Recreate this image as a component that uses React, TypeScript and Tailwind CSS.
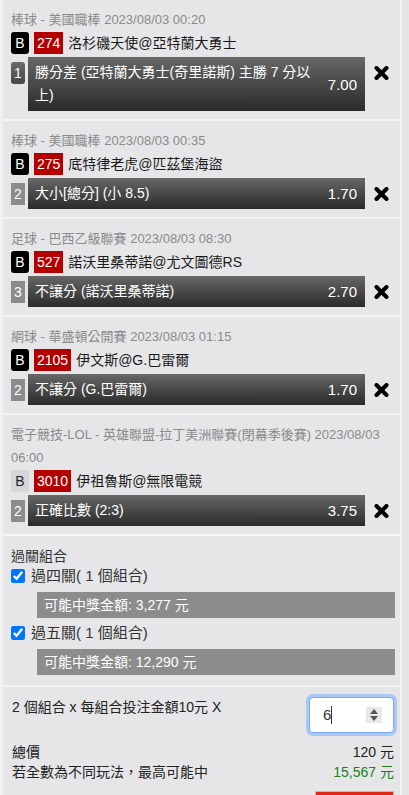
import React from "react";

type Bet = {
  league: string;
  badge: "dark" | "light";
  code: string;
  teams: string;
  idx: string;
  idxRound?: boolean;
  pick: string;
  odds: string;
};

const bets: Bet[] = [
  {
    league: "棒球 - 美國職棒 2023/08/03 00:20",
    badge: "dark",
    code: "274",
    teams: "洛杉磯天使@亞特蘭大勇士",
    idx: "1",
    idxRound: true,
    pick: "勝分差 (亞特蘭大勇士(奇里諾斯) 主勝 7 分以上)",
    odds: "7.00",
  },
  {
    league: "棒球 - 美國職棒 2023/08/03 00:35",
    badge: "dark",
    code: "275",
    teams: "底特律老虎@匹茲堡海盜",
    idx: "2",
    pick: "大小[總分] (小 8.5)",
    odds: "1.70",
  },
  {
    league: "足球 - 巴西乙級聯賽 2023/08/03 08:30",
    badge: "dark",
    code: "527",
    teams: "諾沃里桑蒂諾@尤文圖德RS",
    idx: "3",
    pick: "不讓分 (諾沃里桑蒂諾)",
    odds: "2.70",
  },
  {
    league: "網球 - 華盛頓公開賽 2023/08/03 01:15",
    badge: "dark",
    code: "2105",
    teams: "伊文斯@G.巴雷爾",
    idx: "2",
    pick: "不讓分 (G.巴雷爾)",
    odds: "1.70",
  },
  {
    league: "電子競技-LOL - 英雄聯盟-拉丁美洲聯賽(閉幕季後賽) 2023/08/03 06:00",
    badge: "light",
    code: "3010",
    teams: "伊祖魯斯@無限電競",
    idx: "2",
    pick: "正確比數 (2:3)",
    odds: "3.75",
  },
];

function CloseIcon() {
  return (
    <svg width="15" height="14" viewBox="0 0 15 14" className="block">
      <path
        d="M2.5 2 L12.5 12 M12.5 2 L2.5 12"
        stroke="#000"
        strokeWidth="4"
        strokeLinecap="round"
      />
    </svg>
  );
}

function BetCard({ bet }: { bet: Bet }) {
  return (
    <div className="border-b-2 border-[#f4f4f5] pt-[8px] pb-[8px] pl-[8px] pr-[6px]">
      <div className="text-[13px] leading-[23px] text-[#8a8a8a] pr-[6px]">
        {bet.league}
      </div>
      <div className="mt-[1px] flex items-center gap-[5px] h-[22px]">
        <span
          className={
            bet.badge === "dark"
              ? "w-[18px] h-[22px] rounded-[3px] bg-black text-white text-[14px] leading-[22px] text-center"
              : "w-[18px] h-[22px] rounded-[3px] bg-[#d6d6d8] text-[#222] text-[14px] leading-[22px] text-center"
          }
        >
          B
        </span>
        <span className="h-[22px] px-[3px] bg-[#b40000] text-white text-[14px] leading-[22px]">
          {bet.code}
        </span>
        <span className="text-[14px] leading-[22px] text-[#1a1a1a]">
          {bet.teams}
        </span>
      </div>
      <div className="mt-[3px] flex items-start">
        <div
          className={
            bet.idxRound
              ? "mt-[5px] w-[14px] h-[22px] rounded-[3px] bg-gradient-to-b from-[#6c6c6c] to-[#474747] text-white text-[14px] leading-[22px] text-center"
              : "mt-[5px] w-[14px] h-[22px] bg-[#8c8c8c] text-white text-[14px] leading-[22px] text-center"
          }
        >
          {bet.idx}
        </div>
        <div className="ml-[3px] w-[337px] flex items-center bg-gradient-to-b from-[#686868] to-[#2b2b2b] py-[4px] pl-[7px] pr-[8px] text-white">
          <div className="flex-1 text-[14px] leading-[23px] pr-[8px]">
            {bet.pick}
          </div>
          <div className="text-[15px] leading-[23px]">{bet.odds}</div>
        </div>
        <div className="ml-[9px] mt-[9px]">
          <CloseIcon />
        </div>
      </div>
    </div>
  );
}

function Combo({ label, amount }: { label: string; amount: string }) {
  return (
    <div>
      <label className="flex items-center h-[20px]">
        <input
          type="checkbox"
          defaultChecked
          className="w-[14px] h-[14px] accent-[#0075ff]"
        />
        <span className="ml-[6px] text-[15px] text-[#333]">{label}</span>
      </label>
      <div className="mt-[6px] ml-[26px] h-[26px] bg-[#8c8c8c] text-white text-[14px] leading-[26px] pl-[7px]">
        可能中獎金額: {amount}
      </div>
    </div>
  );
}

export default function App() {
  return (
    <div
      className="w-[409px] min-h-[795px] flex bg-[#e6e6e8]"
      style={{ fontFamily: '"Liberation Sans", "Noto Sans CJK TC", sans-serif' }}
    >
      <div className="w-[3px] bg-[#f0f0f1]" />
      <div className="w-[397px]">
        {bets.map((b, i) => (
          <BetCard key={i} bet={b} />
        ))}

        <div className="border-b-2 border-[#f4f4f5] pt-[10px] pb-[10px] pl-[8px] pr-[5px]">
          <div className="text-[14px] leading-[20px] text-[#333]">過關組合</div>
          <Combo label="過四關( 1 個組合)" amount="3,277 元" />
          <div className="mt-[5px]">
            <Combo label="過五關( 1 個組合)" amount="12,290 元" />
          </div>
        </div>

        <div className="pt-[10px] pl-[9px] pr-[6px] text-[14px] text-[#222]">
          <div className="flex items-start justify-between">
            <div className="leading-[20px]">2 個組合 x 每組合投注金額10元 X</div>
            <div className="w-[85px] h-[36px] bg-white rounded-[4px] border border-[#7eaaf0] shadow-[0_0_0_3px_#a9c8f4] flex items-center pl-[13px] pr-[11px]">
              <span className="text-[15px] text-[#333]">6</span>
              <span className="w-[1px] h-[18px] bg-[#333]" />
              <div className="ml-auto w-[16px] h-[16px] bg-[#e8e8e8] flex flex-col items-center justify-center gap-[2px]">
                <span className="w-0 h-0 border-l-[4px] border-r-[4px] border-b-[5px] border-l-transparent border-r-transparent border-b-[#555]" />
                <span className="w-0 h-0 border-l-[4px] border-r-[4px] border-t-[5px] border-l-transparent border-r-transparent border-t-[#555]" />
              </div>
            </div>
          </div>
          <div className="mt-[9px] flex justify-between leading-[20px]">
            <span>總價</span>
            <span>120 元</span>
          </div>
          <div className="flex justify-between leading-[20px]">
            <span>若全數為不同玩法，最高可能中</span>
            <span className="text-[#1d7f1d]">15,567 元</span>
          </div>
          <div className="mt-[9px] flex justify-end">
            <div className="w-[79px] h-[30px] bg-[#e0261a] border border-[#f0a4a4]" />
          </div>
        </div>
      </div>
      <div className="w-[2px] bg-[#f3f3f4]" />
    </div>
  );
}
